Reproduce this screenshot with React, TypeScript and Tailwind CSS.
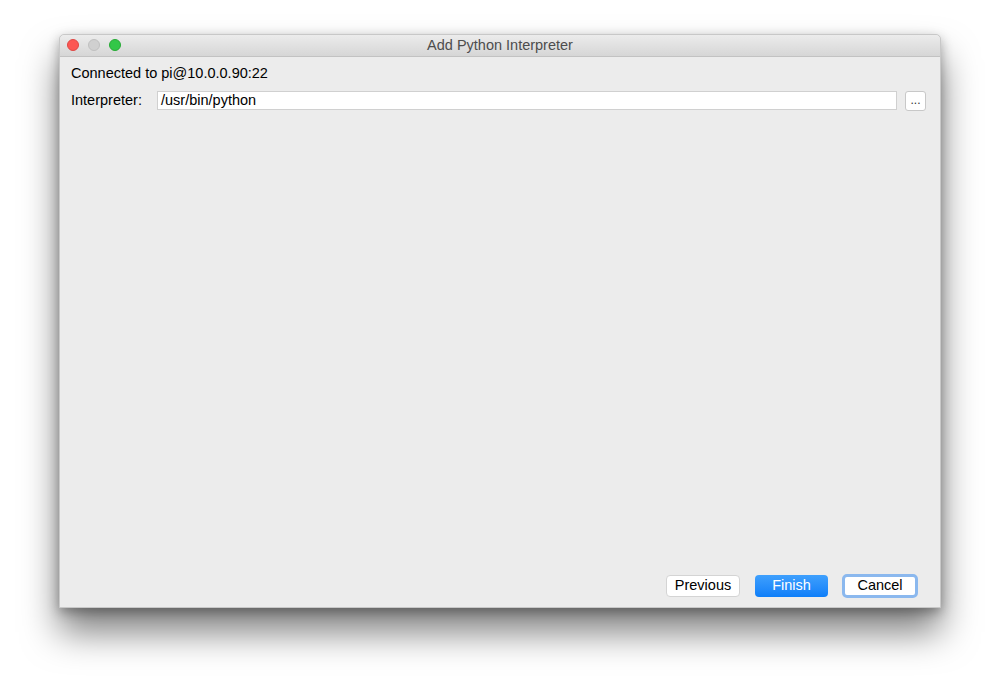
import React from "react";

export default function App() {
  return (
    <div className="w-[1000px] h-[692px] bg-white pt-[34px] pl-[59px]" style={{ fontFamily: '"Liberation Sans", Arial, sans-serif' }}>
      <div className="w-[882px] h-[574px] flex flex-col bg-[#ececec] border border-[#c8c8c8] rounded-t-[5px] shadow-[0_24px_36px_rgba(0,0,0,0.5),0_4px_12px_rgba(0,0,0,0.3)]">
        <div className="h-[22px] shrink-0 relative flex items-center justify-center bg-gradient-to-b from-[#ececec] to-[#d6d6d6] border-b border-[#c2c2c2] rounded-t-[5px]">
          <div className="absolute left-[7px] top-[4px] flex gap-[9px]">
            <div className="w-[12px] h-[12px] rounded-full bg-[#fc5753] border border-[#df4744]" />
            <div className="w-[12px] h-[12px] rounded-full bg-[#d0d0d0] border border-[#c0c0c0]" />
            <div className="w-[12px] h-[12px] rounded-full bg-[#33c748] border border-[#27aa35]" />
          </div>
          <span className="text-[14.5px] text-[#4d4d4d]">Add Python Interpreter</span>
        </div>
        <div className="flex-1 flex flex-col px-[11px]">
          <div className="mt-[8px] h-[17px] flex items-center text-[14.5px] text-black">Connected to pi@10.0.0.90:22</div>
          <div className="mt-[8px] flex items-center">
            <span className="w-[86px] text-[14.5px] text-black">Interpreter:</span>
            <div className="w-[740px] h-[19px] bg-white border border-[#d0d0d0] flex items-center px-[3px] text-[14.5px] text-black">/usr/bin/python</div>
            <div className="ml-[8px] w-[21px] h-[20px] bg-white border border-[#c8c8c8] rounded-[3px] flex items-center justify-center text-[12px] leading-none pb-[2px] text-[#333]">...</div>
          </div>
          <div className="flex-1" />
          <div className="flex justify-end items-center mb-[9px] mr-[11px]">
            <div className="w-[74px] h-[22px] bg-white border border-[#d4d4d4] rounded-[4px] flex items-center justify-center text-[14.5px] text-black">Previous</div>
            <div className="ml-[15px] w-[73px] h-[22px] rounded-[4px] bg-gradient-to-b from-[#3ea0fd] to-[#0c7ef9] flex items-center justify-center text-[14.5px] text-white">Finish</div>
            <div className="ml-[14px] w-[76px] h-[24px] bg-white border-[3px] border-[#8bb8ee] rounded-[5px] flex items-center justify-center text-[14.5px] text-black">Cancel</div>
          </div>
        </div>
      </div>
    </div>
  );
}
